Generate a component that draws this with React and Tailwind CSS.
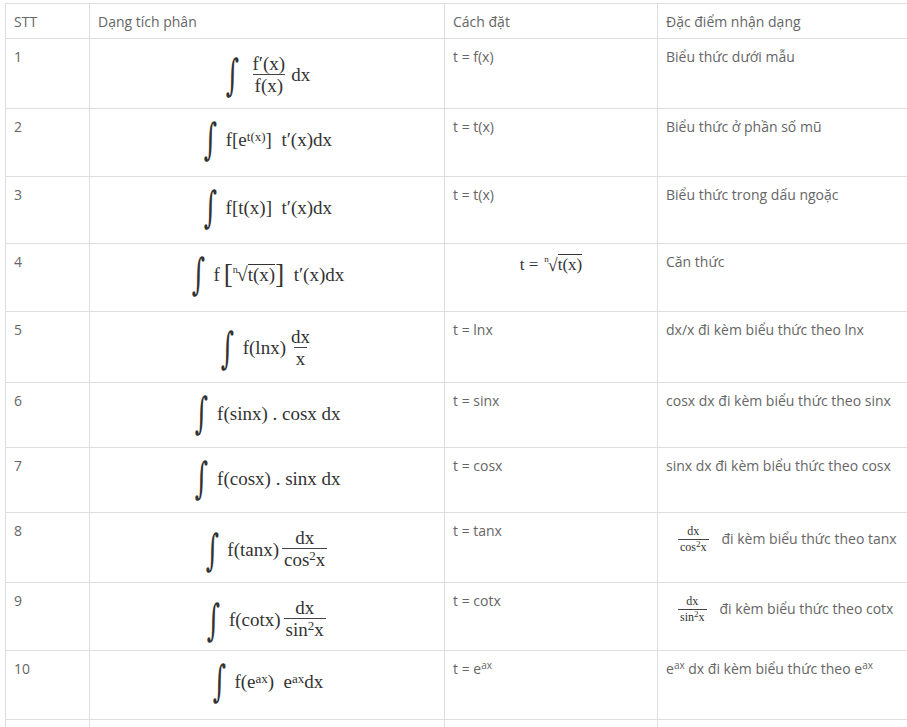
const serif = "font-['Liberation_Serif','Times_New_Roman',serif] text-[#333]";

function Int() {
  return (
    <span className="mr-[7px] inline-block origin-center scale-x-[0.8] scale-y-[1.35] font-['DejaVu_Serif',serif] text-[32px] leading-none text-[#333]">
      ∫
    </span>
  );
}

function Frac({ num, den, small }) {
  return (
    <span className={small ? "inline-flex flex-col items-center text-[12px] leading-[15px]" : "mx-[3px] inline-flex flex-col items-center leading-[21px]"}>
      <span className="px-[2px]">{num}</span>
      <span className="border-t border-[#444] px-[2px]">{den}</span>
    </span>
  );
}

function Sup({ children }) {
  return <sup className="relative -top-[2px] text-[13px]">{children}</sup>;
}

function DenSq() {
  return <span className="relative -top-[6px] text-[13px]">2</span>;
}

function Root({ big }) {
  return (
    <span className="inline-flex items-end">
      <span className={big ? "relative -top-[10px] mr-[-1px] text-[10px] leading-none" : "relative -top-[11px] mr-[-1px] text-[9px] leading-none"}>n</span>
      <span className={big ? "text-[20px] leading-[22px]" : "text-[18px] leading-[20px]"}>√</span>
      <span className="border-t border-[#333] leading-[20px]">t(x)</span>
    </span>
  );
}

function Formula({ children }) {
  return (
    <div className={"flex items-center justify-center pt-[6px] text-[19px] " + serif}>
      <Int />
      <span className="flex items-center whitespace-nowrap">{children}</span>
    </div>
  );
}

function SmallSq() {
  return <span className="relative -top-[4px] text-[9px]">2</span>;
}

const rows = [
  {
    h: "h-[70px]",
    f: (
      <Formula>
        <Frac num="f′(x)" den="f(x)" />
        <span className="ml-[1px]">dx</span>
      </Formula>
    ),
    t: "t = f(x)",
    d: "Biểu thức dưới mẫu",
  },
  {
    h: "h-[68px]",
    f: (
      <Formula>
        f[e<Sup>t(x)</Sup>]&nbsp; t′(x)dx
      </Formula>
    ),
    t: "t = t(x)",
    d: "Biểu thức ở phần số mũ",
  },
  {
    h: "h-[67px]",
    f: <Formula>f[t(x)]&nbsp; t′(x)dx</Formula>,
    t: "t = t(x)",
    d: "Biểu thức trong dấu ngoặc",
  },
  {
    h: "h-[68px]",
    f: (
      <Formula>
        f <span className="ml-[4px] text-[27px] leading-none">[</span>
        <Root big />
        <span className="text-[27px] leading-none">]</span>&nbsp; t′(x)dx
      </Formula>
    ),
    t: (
      <div className={"flex justify-center pt-[2px] text-[17px] " + serif}>
        <span className="mr-[6px] self-end leading-[20px]">t =</span>
        <Root />
      </div>
    ),
    d: "Căn thức",
  },
  {
    h: "h-[71px]",
    f: (
      <Formula>
        f(lnx)
        <Frac num="dx" den="x" />
      </Formula>
    ),
    t: "t = lnx",
    d: "dx/x đi kèm biểu thức theo lnx",
  },
  {
    h: "h-[65px]",
    f: <Formula>f(sinx) . cosx dx</Formula>,
    t: "t = sinx",
    d: "cosx dx đi kèm biểu thức theo sinx",
  },
  {
    h: "h-[65px]",
    f: <Formula>f(cosx) . sinx dx</Formula>,
    t: "t = cosx",
    d: "sinx dx đi kèm biểu thức theo cosx",
  },
  {
    h: "h-[70px]",
    f: (
      <Formula>
        f(tanx)
        <Frac num="dx" den={<>cos<DenSq />x</>} />
      </Formula>
    ),
    t: "t = tanx",
    d: (
      <div className="flex items-center">
        <span className={"ml-[12px] mr-[13px] " + serif}>
          <Frac small num="dx" den={<>cos<SmallSq />x</>} />
        </span>
        <span>đi kèm biểu thức theo tanx</span>
      </div>
    ),
  },
  {
    h: "h-[68px]",
    f: (
      <Formula>
        f(cotx)
        <Frac num="dx" den={<>sin<DenSq />x</>} />
      </Formula>
    ),
    t: "t = cotx",
    d: (
      <div className="flex items-center">
        <span className={"ml-[12px] mr-[13px] " + serif}>
          <Frac small num="dx" den={<>sin<SmallSq />x</>} />
        </span>
        <span>đi kèm biểu thức theo cotx</span>
      </div>
    ),
  },
  {
    h: "h-[69px]",
    f: (
      <Formula>
        f(e<Sup>ax</Sup>)&nbsp; e<Sup>ax</Sup>dx
      </Formula>
    ),
    t: (
      <span>
        t = e<sup className="text-[10px]">ax</sup>
      </span>
    ),
    d: (
      <span>
        e<sup className="text-[10px]">ax</sup> dx đi kèm biểu thức theo e<sup className="text-[10px]">ax</sup>
      </span>
    ),
  },
];

const cell = "border border-[#dddddd] px-2 pt-2 align-top";

export default function App() {
  return (
    <div className="h-screen w-screen overflow-hidden bg-white pl-[5px] pt-[3px]">
      <table className="w-[912px] table-fixed border-collapse font-['Open_Sans',sans-serif] text-[14px] leading-[19px] text-[#666]">
        <colgroup>
          <col className="w-[84px]" />
          <col className="w-[355px]" />
          <col className="w-[213px]" />
          <col className="w-[260px]" />
        </colgroup>
        <thead>
          <tr className="h-[35px]">
            <th className={cell + " text-left font-normal"}>STT</th>
            <th className={cell + " text-left font-normal"}>Dạng tích phân</th>
            <th className={cell + " text-left font-normal"}>Cách đặt</th>
            <th className={cell + " text-left font-normal"}>Đặc điểm nhận dạng</th>
          </tr>
        </thead>
        <tbody>
          {rows.map((r, i) => (
            <tr key={i} className={r.h}>
              <td className={cell}>{i + 1}</td>
              <td className={cell + " pt-0"}>{r.f}</td>
              <td className={cell}>{r.t}</td>
              <td className={cell}>{r.d}</td>
            </tr>
          ))}
          <tr className="h-[60px]">
            <td className={cell}></td>
            <td className={cell}></td>
            <td className={cell}></td>
            <td className={cell}></td>
          </tr>
        </tbody>
      </table>
    </div>
  );
}
